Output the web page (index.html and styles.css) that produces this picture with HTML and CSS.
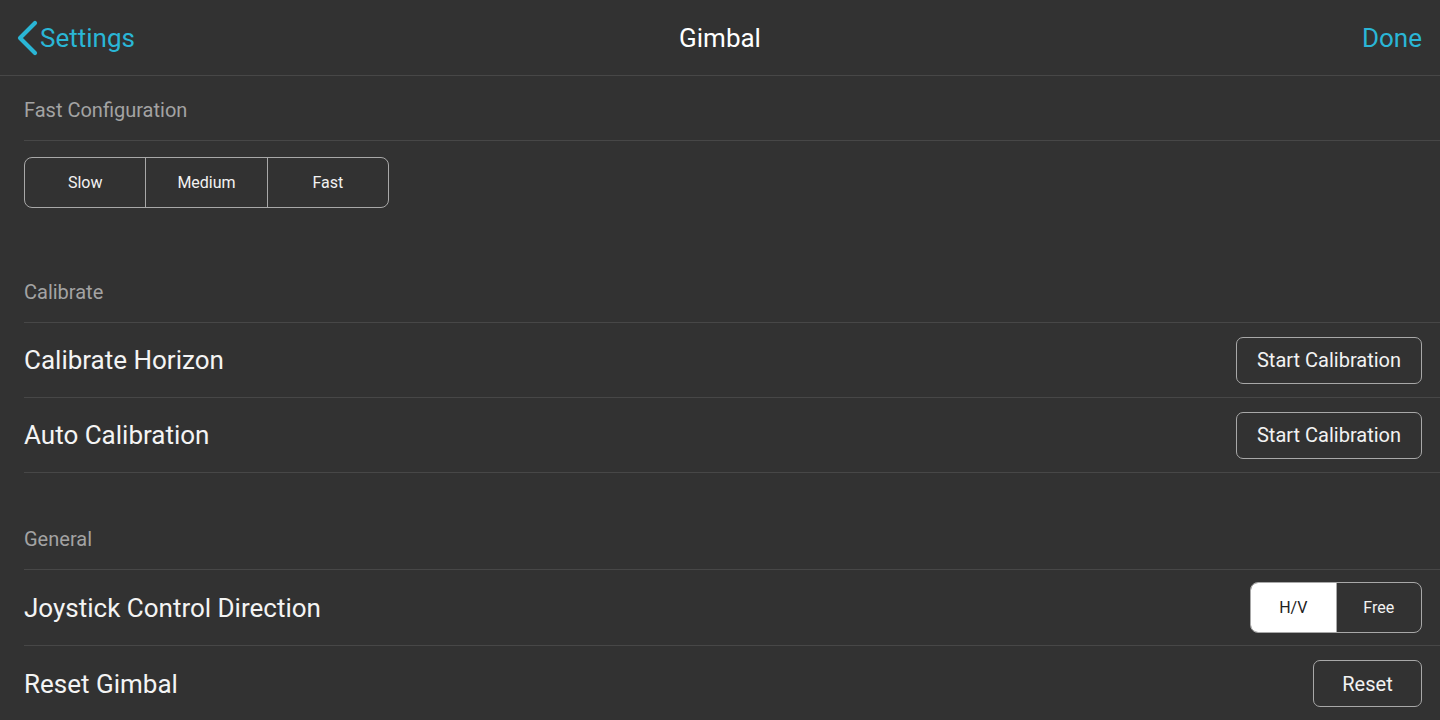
FILE: index.html
```html
<!DOCTYPE html>
<html>
<head>
<meta charset="utf-8">
<link rel="stylesheet" href="styles.css">
</head>
<body>
<header class="topbar">
  <a class="back">
    <svg class="chev" width="24" height="36" viewBox="0 0 24 36"><path d="M20 3 L5 18 L20 33" fill="none" stroke="#2ab6d6" stroke-width="4.2" stroke-linecap="round" stroke-linejoin="round"/></svg>
    <span>Settings</span>
  </a>
  <div class="title">Gimbal</div>
  <a class="done">Done</a>
</header>
<main class="content">
  <div class="section-head">Fast Configuration</div>
  <div class="seg-wrap">
    <div class="seg seg-speed">
      <div class="seg-item">Slow</div>
      <div class="seg-item">Medium</div>
      <div class="seg-item">Fast</div>
    </div>
  </div>

  <div class="section-head">Calibrate</div>
  <div class="row">
    <div class="label">Calibrate Horizon</div>
    <button class="btn">Start Calibration</button>
  </div>
  <div class="row">
    <div class="label">Auto Calibration</div>
    <button class="btn">Start Calibration</button>
  </div>

  <div class="section-head general">General</div>
  <div class="row tall">
    <div class="label">Joystick Control Direction</div>
    <div class="seg seg-dir">
      <div class="seg-item active">H/V</div>
      <div class="seg-item">Free</div>
    </div>
  </div>
  <div class="row last">
    <div class="label">Reset Gimbal</div>
    <button class="btn btn-reset">Reset</button>
  </div>
</main>
</body>
</html>
```

FILE: styles.css
```css
* { box-sizing: border-box; }
html, body {
  margin: 0;
  padding: 0;
  background: #323232;
  width: 1440px;
  height: 720px;
  overflow: hidden;
  font-family: Roboto, "Noto Sans", sans-serif;
  color: #ffffff;
}
.topbar {
  height: 76px;
  border-bottom: 1px solid #474747;
  display: flex;
  align-items: center;
  justify-content: space-between;
  padding: 0 18px 0 15px;
  position: relative;
}
.back {
  display: flex;
  align-items: center;
  color: #2ab6d6;
  font-size: 26px;
}
.back .chev { margin-right: 1px; }
.title {
  position: absolute;
  left: 0;
  right: 0;
  text-align: center;
  font-size: 26px;
  pointer-events: none;
}
.done {
  color: #2ab6d6;
  font-size: 26px;
}
.content {
  padding-left: 24px;
}
.section-head {
  height: 65px;
  display: flex;
  align-items: center;
  padding-top: 4px;
  font-size: 20px;
  color: #a3a3a3;
  border-bottom: 1px solid #474747;
}
.section-head.general { margin-top: 32px; }
.seg-wrap {
  padding: 16px 0 50px;
}
.seg {
  display: flex;
  border: 1.5px solid #a8a8a8;
  border-radius: 8px;
  overflow: hidden;
}
.seg-speed {
  width: 365px;
  height: 51px;
}
.seg-item {
  flex: 1;
  display: flex;
  align-items: center;
  justify-content: center;
  font-size: 16px;
  color: #f2f2f2;
  border-left: 1.5px solid #a8a8a8;
}
.seg-item:first-child { border-left: none; }
.seg-item.active {
  background: #ffffff;
  color: #222222;
}
.row {
  height: 75px;
  display: flex;
  align-items: center;
  justify-content: space-between;
  padding-right: 18px;
  border-bottom: 1px solid #474747;
}
.row.tall { height: 76px; }
.row.last { border-bottom: none; }
.label {
  font-size: 26px;
  color: #f4f4f4;
}
.btn {
  font-family: inherit;
  background: transparent;
  border: 1.5px solid #a8a8a8;
  border-radius: 7px;
  color: #f2f2f2;
  font-size: 20px;
  height: 47px;
  width: 186px;
  padding: 0;
}
.btn-reset { width: 109px; }
.seg-dir {
  width: 172px;
  height: 51px;
}
.seg-dir .seg-item { font-size: 16px; }
```
